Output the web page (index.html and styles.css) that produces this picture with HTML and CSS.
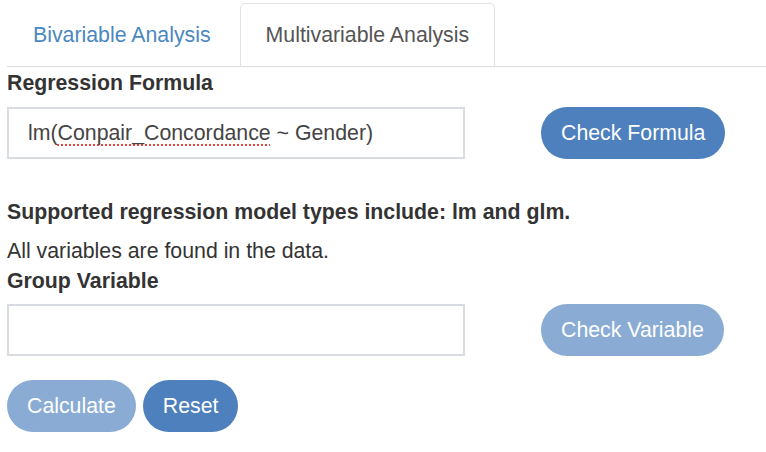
FILE: index.html
```html
<!DOCTYPE html>
<html>
<head>
<meta charset="utf-8">
<link rel="stylesheet" href="styles.css">
</head>
<body>
<div class="page">
  <ul class="tabs">
    <li class="tab"><a class="tab-link">Bivariable Analysis</a></li>
    <li class="tab active"><a class="tab-link">Multivariable Analysis</a></li>
  </ul>
  <div class="pane">
    <label class="label label-first">Regression Formula</label>
    <div class="row">
      <div class="field" role="textbox">lm(<span class="misspelled">Conpair_Concordance</span> ~ Gender)</div>
      <button class="btn">Check Formula</button>
    </div>
    <p class="note">Supported regression model types include: lm and glm.</p>
    <p class="status">All variables are found in the data.</p>
    <label class="label label-group">Group Variable</label>
    <div class="row">
      <div class="field" role="textbox"></div>
      <button class="btn btn-disabled">Check Variable</button>
    </div>
    <div class="actions">
      <button class="btn btn-disabled">Calculate</button>
      <button class="btn">Reset</button>
    </div>
  </div>
</div>
</body>
</html>
```
FILE: styles.css
```css
* { box-sizing: border-box; }
html, body { margin: 0; padding: 0; background: #fff; }
body {
  font-family: "Liberation Sans", Arial, sans-serif;
  font-size: 21.3px;
  line-height: 28px;
  color: #333;
}
.page { padding: 3px 0 0 7px; }
.tabs {
  list-style: none;
  margin: 0;
  padding: 0;
  display: flex;
  gap: 3px;
  border-bottom: 1px solid #dddddd;
}
.tab { margin-bottom: -1px; }
.tab-link {
  display: block;
  height: 64px;
  padding: 17px 25px 0 25px;
  border: 1px solid transparent;
  border-radius: 5px 5px 0 0;
  color: #4a88c0;
  cursor: pointer;
}
.tab.active .tab-link {
  color: #555;
  border-color: #e2e2e2;
  border-bottom-color: #dddddd;
  background: #fff;
}
.pane { display: flex; flex-direction: column; align-items: flex-start; }
.label { display: block; font-weight: bold; color: #333; }
.label-first { margin-top: 2px; margin-bottom: 10px; }
.row { display: flex; align-items: center; }
.field {
  width: 458px;
  height: 52px;
  border: 2px solid #d8dbe1;
  padding: 10px 19px;
  color: #444;
  font-size: 21.3px;
  line-height: 28px;
}
.misspelled {
  text-decoration: underline dotted #e0463f;
  text-decoration-thickness: 2px;
  text-underline-offset: 4px;
}
.btn {
  font-family: "Liberation Sans", Arial, sans-serif;
  font-size: 21.3px;
  line-height: 28px;
  height: 52px;
  padding: 0 20px;
  border: none;
  border-radius: 26px;
  background: #4d80bc;
  color: #fff;
  cursor: pointer;
}
.row .btn { margin-left: 76px; }
.btn-disabled { background: #8aacd4; }
.note { margin: 39px 0 0; font-weight: bold; color: #333; }
.status { margin: 11px 0 0; }
.label-group { margin-top: 2px; margin-bottom: 9px; }
.actions { display: flex; gap: 7px; margin-top: 24px; }
```
